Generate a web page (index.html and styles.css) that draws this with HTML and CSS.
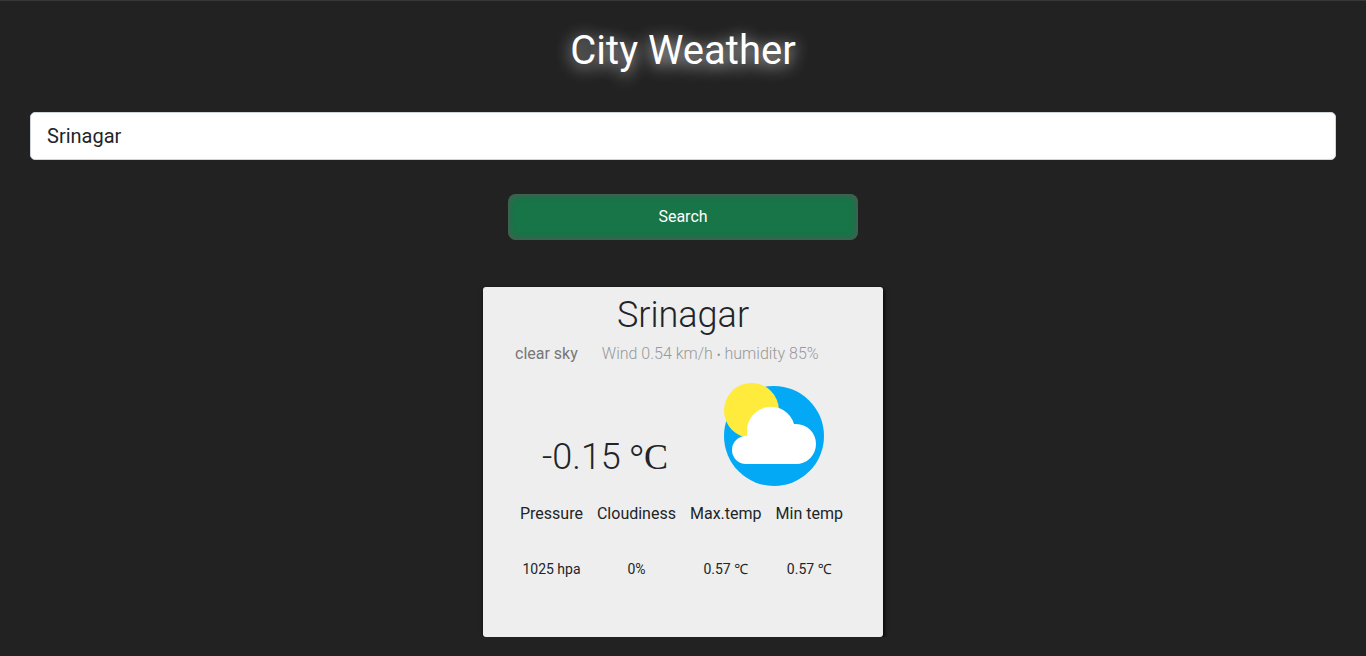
FILE: index.html
```html
<!DOCTYPE html>
<html lang="en">
<head>
<meta charset="utf-8">
<meta name="viewport" content="width=device-width, initial-scale=1">
<title>City Weather</title>
<link rel="stylesheet" href="styles.css">
</head>
<body class="page">
<h1 class="title">City Weather</h1>
<form class="search">
  <input class="search-input" type="text" aria-label="City" value="Srinagar">
  <button class="search-button" type="button">Search</button>
</form>
<main class="card">
  <h2 class="city">Srinagar</h2>
  <p class="summary">
    <span class="sky">clear sky</span>
    <span class="wind">Wind 0.54 km/h <span class="dot">•</span> humidity 85%</span>
  </p>
  <div class="current">
    <p class="temp">-0.15 <span class="unit">°C</span></p>
    <svg class="icon" viewBox="0 0 100 104" aria-hidden="true">
      <circle cx="50" cy="53" r="50" fill="#03a9f4"/>
      <circle cx="27.5" cy="27.5" r="27.5" fill="#ffeb3b"/>
      <path fill="#fff" d="M22 81A14 14 0 0 1 22 53H23V48A24 24 0 0 1 70 41H72A20 20 0 0 1 72 81Z"/>
    </svg>
  </div>
  <table class="details">
    <thead>
      <tr><th>Pressure</th><th>Cloudiness</th><th>Max.temp</th><th>Min temp</th></tr>
    </thead>
    <tbody>
      <tr><td>1025 hpa</td><td>0%</td><td>0.57 ℃</td><td>0.57 ℃</td></tr>
    </tbody>
  </table>
</main>
</body>
</html>
```
FILE: styles.css
```css
* { box-sizing: border-box; }
.page {
  margin: 0;
  padding: 26px 30px 0;
  border-top: 1px solid #383838;
  background: #222;
  color: #212529;
  font: 16px/24px Roboto, "Noto Sans", sans-serif;
}
.title {
  margin: 0 0 37px;
  color: #fff;
  font-size: 40px;
  line-height: 48px;
  font-weight: 400;
  text-align: center;
  text-shadow: 0 3px 16px #ddd;
}
.search {
  display: flex;
  flex-direction: column;
  align-items: center;
  gap: 34px;
  margin-bottom: 47px;
}
.search-input {
  width: 100%;
  height: 48px;
  padding: 8px 16px;
  border: 1px solid #ced4da;
  border-radius: 5px;
  background: #fff;
  color: #212529;
  font: 20px/30px Roboto, sans-serif;
}
.search-button {
  width: 350px;
  max-width: 100%;
  height: 46px;
  border: 0;
  border-radius: 8px;
  background: #177548;
  box-shadow: inset 0 0 6px 1px #555;
  color: #fff;
  font: 16px/24px Roboto, sans-serif;
}
.card {
  width: 400px;
  max-width: 100%;
  min-height: 350px;
  margin: 0 auto;
  padding: 4px 30px;
  border-radius: 3px;
  background: #eee;
  box-shadow: 1px 2px 4px #000;
}
.city {
  margin: 0;
  font-size: 36px;
  line-height: 48px;
  font-weight: 300;
  text-align: center;
}
.summary {
  display: flex;
  gap: 24px;
  margin: 3px 0 0;
  padding-left: 2px;
}
.sky { color: #777; }
.wind { color: #999; font-weight: 300; }
.dot { font-size: 12px; }
.current {
  display: flex;
  justify-content: space-between;
  align-items: flex-end;
  margin: 16px 29px 15px;
}
.temp {
  margin: 0 0 6px;
  font-size: 36px;
  line-height: 48px;
  font-weight: 300;
}
.unit { font-family: "Liberation Serif", serif; line-height: 1; }
.icon { width: 100px; height: 104px; }
.details {
  border-collapse: collapse;
  text-align: center;
  white-space: nowrap;
}
.details th { padding: 0 7px; font-weight: 400; }
.details td { padding: 31px 0 0; font-size: 14px; }
```
